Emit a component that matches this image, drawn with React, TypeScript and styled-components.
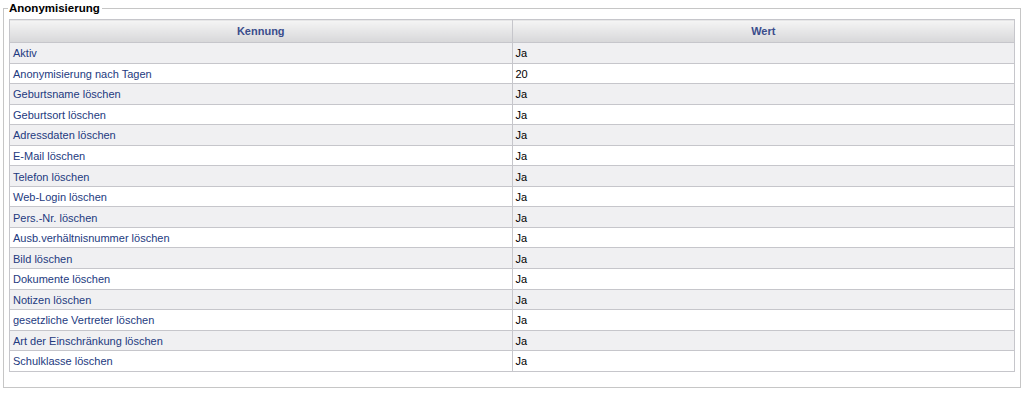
import styled, { createGlobalStyle } from "styled-components";

const GlobalStyle = createGlobalStyle`
	body {
		margin: 0;
		background: #ffffff;
		font-family: "Liberation Sans", Arial, sans-serif;
	}
`;

const Page = styled.div`
	padding: 0 3px;
`;

const Box = styled.fieldset`
	margin: 0;
	border: 1px solid #c6c6c6;
	padding: 0 5px 15px 5px;
	min-width: 0;
	height: 388px;
	box-sizing: border-box;
`;

const Legend = styled.legend`
	padding: 0 2px 0 1px;
	margin-left: -1px;
	font-size: 11.5px;
	font-weight: bold;
	line-height: 16px;
	color: #000;
`;

const Table = styled.table`
	width: 100%;
	margin-top: 3px;
	border-collapse: collapse;
	border: 1px solid #c6c6cb;
	font-size: 11px;
`;

const HeadCell = styled.th`
	width: 50%;
	height: 22px;
	padding: 0 4px;
	border: 1px solid #c6c6cb;
	background: linear-gradient(#f5f5f5, #d7d7d9);
	color: #3a4d8c;
	font-weight: bold;
	text-align: center;
`;

const Row = styled.tr<{ $odd: boolean }>`
	background: ${(p) => (p.$odd ? "#f0f0f2" : "#ffffff")};
`;

const Cell = styled.td<{ $key?: boolean }>`
	height: 18.55px;
	padding: 1px 3px 0 3px;
	border-top: 1px solid #c6c6cb;
	border-bottom: 1px solid #c6c6cb;
	border-left: 1px solid #c6c6cb;
	color: ${(p) => (p.$key ? "#233a80" : "#000000")};
	line-height: 14px;
	vertical-align: middle;
`;

const rows: [string, string][] = [
	["Aktiv", "Ja"],
	["Anonymisierung nach Tagen", "20"],
	["Geburtsname löschen", "Ja"],
	["Geburtsort löschen", "Ja"],
	["Adressdaten löschen", "Ja"],
	["E-Mail löschen", "Ja"],
	["Telefon löschen", "Ja"],
	["Web-Login löschen", "Ja"],
	["Pers.-Nr. löschen", "Ja"],
	["Ausb.verhältnisnummer löschen", "Ja"],
	["Bild löschen", "Ja"],
	["Dokumente löschen", "Ja"],
	["Notizen löschen", "Ja"],
	["gesetzliche Vertreter löschen", "Ja"],
	["Art der Einschränkung löschen", "Ja"],
	["Schulklasse löschen", "Ja"],
];

export default function App() {
	return (
		<Page>
			<GlobalStyle />
			<Box>
				<Legend>Anonymisierung</Legend>
				<Table>
					<thead>
						<tr>
							<HeadCell>Kennung</HeadCell>
							<HeadCell>Wert</HeadCell>
						</tr>
					</thead>
					<tbody>
						{rows.map(([key, value], i) => (
							<Row key={key} $odd={i % 2 === 0}>
								<Cell $key>{key}</Cell>
								<Cell>{value}</Cell>
							</Row>
						))}
					</tbody>
				</Table>
			</Box>
		</Page>
	);
}
